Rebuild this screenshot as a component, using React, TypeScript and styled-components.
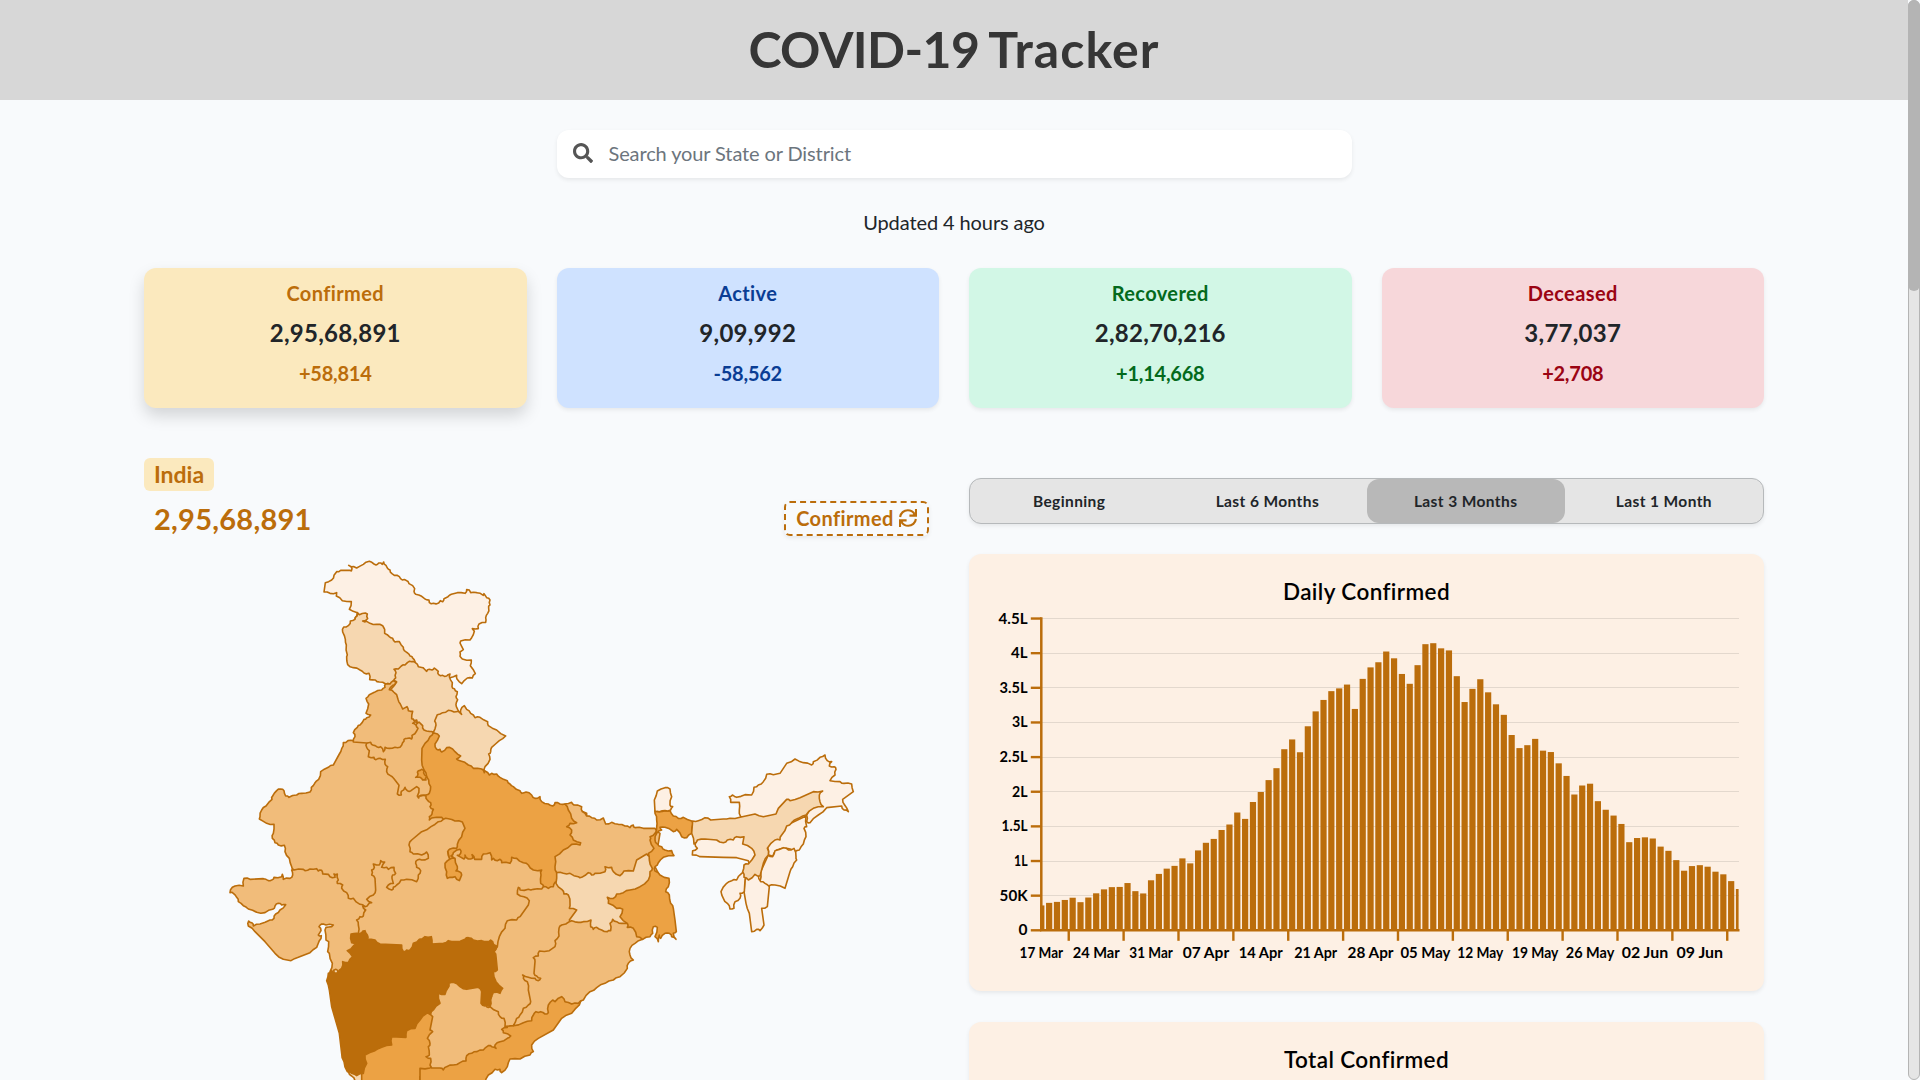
import React from 'react';
import styled, { createGlobalStyle } from 'styled-components';
import { FaSearch } from 'react-icons/fa';

const FONT = `Lato, "Open Sans", "Liberation Sans", sans-serif`;
const ACCENT = '#bb6d0b';

const GlobalStyle = createGlobalStyle`
  * { box-sizing: border-box; }
  html, body { margin: 0; height: 1080px; overflow: hidden; }
  body { background: #f8fafc; font-family: ${FONT}; color: #212529; }
`;

const Shell = styled.div`
  display: flex;
  height: 1080px;
  overflow: hidden;
`;

const Page = styled.div`
  flex: 1;
  min-width: 0;
  height: 1080px;
  overflow: hidden;
`;

const ScrollTrack = styled.div`
  width: 12px;
  background: #e5e5e5;
  border: 1px solid #b4b4b4;
  border-radius: 6px;
`;

const ScrollThumb = styled.div`
  width: 12px;
  height: 291px;
  margin: -1px;
  background: #b4b4b4;
  border-radius: 6px;
`;

const Header = styled.header`
  display: flex;
  align-items: center;
  justify-content: center;
  height: 100px;
  padding-bottom: 3px;
  background: #d7d7d7;
`;

const Title = styled.h1`
  display: flex;
  gap: 9px;
  margin: 0;
  font-size: 50px;
  line-height: 60px;
  font-weight: 700;
  color: #363636;
`;

const TitleWord = styled.span<{ $tracking: number }>`
  letter-spacing: ${(p) => p.$tracking}px;
`;

const Container = styled.main`
  width: 1620px;
  margin: 0 auto;
  padding-top: 30px;
`;

const SearchBox = styled.label`
  display: flex;
  align-items: center;
  gap: 16px;
  width: 795px;
  height: 48px;
  margin: 0 auto;
  padding: 0 16px 2px;
  border-radius: 12px;
  background: #fff;
  box-shadow: 0 2px 4px rgba(0, 0, 0, 0.075);
  color: #555;
  font-size: 20px;
`;

const SearchInput = styled.input`
  flex: 1;
  border: 0;
  outline: 0;
  padding: 0;
  background: transparent;
  font: 400 20px ${FONT};
  letter-spacing: -0.12px;
  &::placeholder { color: #6c757d; opacity: 1; }
`;

const Updated = styled.p`
  margin: 32px 0 34px;
  text-align: center;
  font-size: 20px;
  line-height: 24px;
  letter-spacing: -0.1px;
`;

const CardRow = styled.section`
  display: grid;
  grid-template-columns: repeat(4, 1fr);
  gap: 30px;
`;

const StatCard = styled.article<{ $bg: string; $fg: string; $raised?: boolean }>`
  display: flex;
  flex-direction: column;
  align-items: center;
  height: 140px;
  padding-top: 12px;
  border-radius: 12px;
  background: ${(p) => p.$bg};
  color: ${(p) => p.$fg};
  font-size: 20px;
  line-height: 26px;
  font-weight: 700;
  box-shadow: ${(p) => (p.$raised ? '0 8px 16px rgba(0,0,0,.15)' : '0 2px 4px rgba(0,0,0,.075)')};
`;

const StatLabel = styled.div`
  letter-spacing: 0.4px;
`;

const StatDelta = styled.div`
  letter-spacing: -0.25px;
`;

const StatTotal = styled.div`
  margin: 12px 0;
  font-size: 24px;
  line-height: 30px;
  letter-spacing: 0.25px;
  color: #212529;
`;

const Columns = styled.section`
  display: grid;
  grid-template-columns: 795px 795px;
  gap: 30px;
`;

const MapColumn = styled.div`
  display: flex;
  flex-direction: column;
  align-items: flex-start;
  padding-top: 50px;
`;

const RegionBadge = styled.span`
  display: flex;
  align-items: center;
  justify-content: center;
  width: 70px;
  height: 33px;
  padding-bottom: 2px;
  border-radius: 6px;
  background: #fbe9be;
  color: ${ACCENT};
  font-size: 23px;
  font-weight: 700;
`;

const MapHeader = styled.div`
  display: flex;
  justify-content: space-between;
  align-items: center;
  width: 795px;
  height: 35px;
  margin-top: 10px;
  padding: 0 10px;
  color: ${ACCENT};
`;

const RegionTotal = styled.span`
  font-size: 29px;
  font-weight: 700;
  letter-spacing: 0.25px;
`;

const MetricButton = styled.button`
  display: flex;
  align-items: center;
  justify-content: center;
  gap: 5px;
  width: 145px;
  height: 35px;
  padding: 0 0 2px;
  border: 2px dashed ${ACCENT};
  border-radius: 6px;
  background: transparent;
  color: ${ACCENT};
  font: 700 20px ${FONT};
  letter-spacing: 0.4px;
  box-shadow: 0 2px 4px rgba(0, 0, 0, 0.075);
`;

const MapSvg = styled.svg`
  display: block;
  width: 795px;
  height: 530px;
  margin-top: 14px;
`;

const ChartColumn = styled.div`
  padding-top: 70px;
`;

const Tabs = styled.div`
  display: grid;
  grid-template-columns: repeat(4, 1fr);
  height: 46px;
  border: 1px solid #b6b9bb;
  border-radius: 12px;
  background: #e5e5e5;
  box-shadow: 0 2px 4px rgba(0, 0, 0, 0.075);
`;

const Tab = styled.button<{ $active?: boolean }>`
  border: 0;
  border-radius: 12px;
  background: ${(p) => (p.$active ? '#b8b8b8' : 'transparent')};
  color: #212529;
  font: 700 15.5px ${FONT};
  letter-spacing: 0.4px;
`;

const ChartCard = styled.article`
  height: 437px;
  margin-top: 30px;
  border-radius: 12px;
  background: #fdf0e4;
  box-shadow: 0 2px 4px rgba(0, 0, 0, 0.075);
  & + & { margin-top: 31px; }
`;

const ChartTitle = styled.h2`
  margin: 0;
  padding-top: 23px;
  text-align: center;
  font-size: 22.5px;
  line-height: 30px;
  font-weight: 600;
  letter-spacing: 0.4px;
  color: #000;
`;

const ChartSvg = styled.svg`
  display: block;
  width: 795px;
  height: 380px;
  margin-top: -1px;
  font-family: ${FONT};
  font-size: 14.3px;
  font-weight: 700;
`;

type Piece = [tile: 'N' | 'W' | 'C' | 'E', points: string];
type Region = { name: string; shade: string; pieces: Piece[] };

const TILE_ORIGIN = { N: [0, 0], W: [0, 780], C: [600, 420], E: [1260, 570] } as const;

const S1 = '#fdf0e4';
const S2 = '#f6d7b0';
const S3 = '#f1bc7a';
const S4 = '#eca244';
const S5 = ACCENT;

// Painted back to front: a region's hidden edges run below its later neighbours.
const REGIONS: Region[] = [
  { name: 'Ladakh', shade: S1, pieces: [['N', '350,65 362,61 385,61 394,63 396,56 386,46 402,50 410,54 430,43 448,34 462,42 468,45 476,39 487,43 491,36 498,46 502,54 510,60 516,71 523,76 538,80 547,90 558,91 567,101 578,107 584,116 582,124 587,133 605,139 615,147 627,150 628,158 640,160 656,159 661,152 668,155 672,146 684,140 694,133 712,128 735,130 740,119 748,120 752,128 770,128 790,136 792,131 800,143 810,150 810,165 806,174 803,190 797,203 797,217 777,222 775,236 757,236 763,244 755,263 750,270 722,273 720,279 730,299 720,306 720,319 727,327 754,330 751,347 766,371 757,384 742,384 725,401 711,387 710,376 690,383 660,400 600,370 540,340 430,240 405,205 412,188 388,178 394,155 367,152 349,138 350,128 330,130 312,126 316,98 335,90 342,76']] },
  { name: 'Jammu and Kashmir', shade: S2, pieces: [['N', '412,188 418,194 436,189 442,192 443,206 428,213 440,214 450,220 470,223 488,227 494,238 494,250 508,260 518,265 525,276 538,275 550,292 553,302 563,309 570,318 578,324 585,335 590,360 540,400 510,402 497,402 478,396 466,390 449,389 447,370 432,369 420,360 400,353 383,344 380,320 382,315 379,285 376,268 368,246 371,231 386,226 391,213 405,208 411,198']] },
  { name: 'Uttar Pradesh', shade: S4, pieces: [['C', '40,127 100,130 180,220 195,243 208,255 215,250 230,252 240,262 262,272 270,282 280,290 300,302 306,310 318,306 335,315 345,325 360,320 365,335 385,342 398,348 405,338 420,342 435,342 500,370 500,460 430,520 430,560 430,620 340,620 300,600 100,560 80,470 90,400 30,400 0,330'], ['N', '600,700 590,600']] },
  { name: 'Himachal Pradesh', shade: S2, pieces: [['N', '585,337 575,335 563,337 555,345 544,348 535,357 522,358 528,368 527,384 521,392 530,396 512,418 510,430 535,490 560,510 590,545 605,560 640,550 660,540 690,520 720,500 713,478 709,470 709,458 713,449 708,440 712,425 703,416 696,410 697,398 688,380 690,372 680,378 668,376 656,374 655,364 643,354 636,360 628,358 620,364 609,353 595,350']] },
  { name: 'Rajasthan', shade: S3, pieces: [['N', '602,738 600,700 540,650 470,600 470,570 420,560 400,572 384,572 370,578 365,596 358,612 340,645 325,652 302,665 296,688 284,700 274,712 270,726 245,730 230,735 207,742 197,738 192,722 182,717 170,722 158,738 156,748 138,768 125,780 120,800'], ['W', '118,27 140,40 162,43 160,70 157,85 165,98 175,105 193,106 195,125 208,145 215,170 222,180 222,200 260,200 330,230 400,300 435,310 500,290 600,240 640,170 680,60 670,28 665,22 635,24 628,30 628,20'], ['N', '636,792 640,778 630,770 632,758 622,750 618,738']] },
  { name: 'Haryana', shade: S3, pieces: [['N', '440,580 440,592 448,602 445,620 462,622 468,629 480,625 496,628 495,642 503,650 500,665 510,676 522,686 537,706 532,732 544,735 544,724 555,712 562,722 573,722 590,710 597,715 592,738 596,744 602,736 618,735 628,730 632,710 626,690 620,680 612,660 605,630 606,595 615,580 630,560 640,547 628,544 612,540 608,527 597,516 580,530 560,550 480,560 452,560']] },
  { name: 'Punjab', shade: S3, pieces: [['N', '497,402 495,412 485,420 463,427 448,434 438,445 446,462 438,490 452,495 440,503 432,508 420,525 412,532 400,548 405,560 400,576 440,579 452,577 460,586 470,590 482,590 490,605 495,592 508,595 525,592 540,592 548,578 552,568 562,565 575,567 576,556 590,543 594,535 588,525 578,520 585,515 592,518 590,510 582,512 575,506 578,484 565,482 561,470 548,477 541,462 534,448 530,434 521,426 508,419 514,410 524,404 528,396 520,392 510,402']] },
  { name: 'Uttarakhand', shade: S2, pieces: [['N', '640,547 648,525 644,513 652,494 668,488 685,481 702,486 715,484 725,493 722,480 733,467 740,478 752,490 765,503 780,502 803,515 805,527 830,540 857,558 838,572 815,592 812,605 806,612 810,628 795,650 793,668 785,657 760,655 745,645 722,633 710,627 722,618 705,605 688,592 680,593 665,606 660,598 650,598 645,582 658,558 645,550']] },
  { name: 'Delhi', shade: S4, pieces: [['N', '595,662 605,658 612,662 614,675 620,680 618,690 608,690 600,682 587,682 594,672']] },
  { name: 'Gujarat', shade: S3, pieces: [['W', '222,180 250,178 255,182 270,177 290,176 295,183 305,181 308,192 325,193 330,200 345,202 342,192 352,192 355,210 352,220 368,225 365,235 380,248 385,265 400,265 420,283 435,290 440,320 430,380 420,400 380,500 335,500 330,485 337,460 328,430 323,425 326,395 318,390 315,360 318,352 335,350 340,345 318,345 305,342 297,350 303,362 295,375 304,377 298,392 290,412 270,428 235,442 213,452 190,448 165,430 135,395 105,365 85,348 86,333 95,338 100,348 120,342 150,330 162,325 167,312 180,300 197,284 185,285 175,280 165,288 158,298 135,308 110,307 85,297 70,287 55,275 50,262 40,250 30,248 37,232 45,228 70,228 72,205 90,208 130,206 145,212 155,210 162,202 185,200 187,193 190,208 210,205 218,195 215,180']] },
  { name: 'Madhya Pradesh', shade: S3, pieces: [['W', '670,28 685,26 705,33 727,36 735,55 725,80 712,103 710,115 690,117 683,125 688,145 695,150 705,150 693,138 700,128 720,118 722,130 712,136 732,147 735,135 745,147 758,145 756,134 764,148 785,148 790,132 810,128 815,150 820,145 832,152 840,148 845,158 870,160 875,142 890,145 910,158 925,165 940,180'], ['C', '365,540 363,555 362,580 372,592 360,620 340,640 360,700 300,740 240,790 200,790 0,790'], ['W', '440,420 415,370 415,345 410,330 420,320 430,318 437,300 428,288 435,290 445,283 455,278 440,268 460,255 467,240 465,205 455,195 455,180 463,172 460,162 478,165 482,152 494,156 485,172 500,172 505,178 522,172 527,190 518,195 516,205 520,220 505,225 500,232 515,240 520,232 530,225 543,210 560,208 590,215 595,195 602,182 590,172 587,160 592,150 605,150 625,145 620,126 605,135 580,132 570,125 567,105 575,90 605,65 633,50 655,35']] },
  { name: 'Lalitpur', shade: S4, pieces: [['W', '705,145 690,147 675,160 680,185 682,205 690,202 705,200 718,212 725,195 718,185 708,183 712,170']] },
  { name: 'Bihar', shade: S3, pieces: [['C', '435,342 455,337 462,345 485,350 487,365 500,378 515,383 530,390 550,384 557,402 575,397 595,403 615,408 630,413 640,405 645,413 670,415 705,415 720,430 710,490 690,500 670,540 600,580 430,575 410,548 405,530 405,500 430,480 455,463 480,465 482,458 460,450 450,435 455,420 440,410 450,400 470,398 455,385 445,360']] },
  { name: 'Chhattisgarh', shade: S3, pieces: [['C', '405,577 400,590 385,595 370,590 365,597 340,598 325,598 300,600 295,592 292,612 312,620 328,632 325,645 300,680 290,690 262,692 255,715 238,740 232,770 210,800 210,930 210,980 240,1030 280,1007 340,960 400,880 450,760 500,690 470,620 430,575']] },
  { name: 'Jharkhand', shade: S2, pieces: [['C', '410,548 430,550 450,550 475,560 485,562 505,548 515,555 525,550 555,545 555,530 575,532 580,545 600,557 612,543 640,543 650,510 680,492 690,500 700,520 720,560 640,640 660,700 600,740 470,740 448,690 470,660 448,655 450,640 445,615 432,612 425,598 408,580']] },
  { name: 'Goa', shade: S2, pieces: [['W', '385,785 395,798 405,812 425,830 430,785']] },
  { name: 'Karnataka', shade: S4, pieces: [['W', '425,850 425,760 430,720 600,600 640,600 650,780 600,800 600,850']] },
  { name: 'Andhra Pradesh', shade: S4, pieces: [['C', '490,925 478,945 455,970 425,985 400,1020 355,1045 335,1065 340,1085 330,1095 300,1107 270,1107 262,1130 245,1148 240,1138 225,1138 205,1155 195,1180 190,1210 0,1210 0,1135 30,1134 60,1110 200,1040 245,1010 280,1007 340,960 420,880']] },
  { name: 'Odisha', shade: S3, pieces: [['C', '448,695 455,692 475,697 490,695 513,690 512,710 520,718 530,712 545,720 562,725 572,722 570,700 578,688 590,695 605,700 640,700 680,720 668,748 645,760 630,775 630,795 640,810 625,820 622,835 600,860 580,870 555,880 530,893 510,905 490,930 475,940 455,942 435,935 425,920 405,935 398,930 385,945 385,968 375,972 362,965 348,965 340,975 335,992 310,998 280,1007 290,985 300,975 310,955 325,945 332,935 325,900 322,875 310,865 308,855 325,862 345,865 355,872 362,865 350,858 342,850 345,815 340,803 355,798 358,783 388,782 405,770 405,752 417,738 417,715 425,705']] },
  { name: 'Telangana', shade: S3, pieces: [['C', '210,950 235,965 240,980 252,985 255,1010 262,1012 245,1018 250,1028 272,1038 262,1045 240,1055 225,1065 228,1075 215,1070 205,1067 190,1080 170,1085 155,1090 140,1097 138,1113 120,1118 100,1125 80,1130 70,1140 60,1134 35,1134 30,1125 32,1105 18,1100 28,1095 25,1070 30,1060 22,1045 38,1025 30,1020 38,980 25,970'], ['W', '640,570 660,520 700,490 800,520 815,560 800,590']] },
  { name: 'West Bengal', shade: S4, pieces: [['C', '705,362 718,365 735,362 750,362 760,378 775,385 790,382 815,393 820,400 815,430 800,443 785,440 770,418 760,425 735,412 720,412 725,420 710,430 705,450 712,462 725,470 735,480 755,482 762,497 730,502 715,518 705,530 705,543 720,555 747,565 745,590 737,605 748,615 752,640 760,655 765,690 769,725 760,730 768,748 755,740 748,730 735,730 722,745 718,735 715,755 705,740 712,712 700,710 698,730 690,740 668,748 650,740 640,715 622,712 622,700 600,680 608,658 590,655 565,640 562,622 580,625 590,612 610,608 630,600 660,590 685,570 690,545 697,535 688,510 685,490 702,475 690,450 690,440 705,430 710,412 710,390 705,370']] },
  { name: 'Maharashtra', shade: S5, pieces: [['W', '393,372 410,370 425,368 435,362 442,375 442,388 465,390 480,402 545,405 550,425 560,420 570,420 580,400 598,388 615,380 634,380 636,402 670,400 685,392 705,395 735,388 745,383 760,390 785,392 800,395 812,390 820,402 830,408 822,425 828,440 832,480 820,485 828,515 848,535 840,550 820,547 812,570 810,590 795,588 783,580 785,545 775,532 740,538 720,530 700,517 687,520 683,535 675,553 655,550 660,580 640,600 632,612 620,610 600,630 585,655 560,662 558,682 515,680 515,705 485,712 465,722 435,735 440,760 430,790 410,797 395,790 382,785 372,755 365,730 358,670 345,625 335,590 328,540 320,512 325,490 335,482 345,490 355,488 365,475 368,455 385,458 398,440 382,422 400,408 415,398 395,398']] },
  { name: 'Daman', shade: S2, pieces: [['W', '341,481 348,478 354,482 352,489 343,489']] },
  { name: 'Sikkim', shade: S1, pieces: [['C', '705,365 703,330 712,303 735,293 750,297 755,320 750,345 758,350 752,360 735,362 718,365']] },
  { name: 'Arunachal Pradesh', shade: S1, pieces: [['E', '302,230 298,210 298,187 272,187 268,170 278,165 290,172 315,164 335,165 342,142 355,135 370,125 380,103 400,104 420,100 440,70 465,57 490,68 515,75 520,65 540,52 555,45 562,62 575,65 568,78 582,80 588,88 585,105 570,122 600,125 612,130 635,132 640,155 608,178 614,195 625,215 612,210 605,198 560,203 535,225 510,248 500,245 500,225 520,190 400,240']] },
  { name: 'Meghalaya', shade: S1, pieces: [['E', '172,298 165,310 172,325 158,332 157,345 180,350 250,352 290,353 325,362 330,372 345,345 340,310 300,285 180,285']] },
  { name: 'Nagaland', shade: S1, pieces: [['E', '498,228 500,260 492,265 498,290 490,312 478,330 465,335 440,325 410,330 398,350 385,345 382,320 430,260']] },
  { name: 'Manipur', shade: S1, pieces: [['E', '398,350 405,332 430,323 445,330 462,325 468,350 470,360 458,380 450,395 435,445 405,435 385,438 360,425 362,395 385,345']] },
  { name: 'Mizoram', shade: S1, pieces: [['E', '315,420 312,455 318,490 328,520 335,575 350,568 360,572 372,555 365,505 382,500 388,440 375,430 362,425 355,405 330,405']] },
  { name: 'Tripura', shade: S1, pieces: [['E', '315,400 305,400 290,420 275,422 260,430 243,455 250,475 262,490 270,507 282,505 285,485 300,475 300,460 313,455 315,420']] },
  { name: 'Assam', shade: S2, pieces: [['E', '158,243 175,242 195,233 212,240 250,237 270,235 300,232 345,222 370,230 408,222 415,205 440,178 450,182 480,173 520,155 548,153 538,165 540,185 550,200 520,205 498,225 475,235 455,248 440,258 425,285 420,300 405,300 382,325 385,345 370,370 360,408 345,403 325,420 312,412 308,395 312,375 325,372 345,345 335,325 308,312 312,290 290,290 280,300 262,300 250,308 230,300 195,297 172,300 162,312 155,280']] },
];

const offsetPoints = ([tile, pts]: Piece): [number, number][] => {
  const [ox, oy] = TILE_ORIGIN[tile];
  return pts.split(' ').map((p) => {
    const [x, y] = p.split(',').map(Number);
    return [x + ox, y + oy];
  });
};

const toPoints = (pieces: Piece[]) => {
  const pts = pieces.flatMap(offsetPoints);
  const out: string[] = [];
  pts.forEach(([x, y], i) => {
    const [nx, ny] = pts[(i + 1) % pts.length];
    out.push(`${x},${y}`);
    const len = Math.hypot(nx - x, ny - y);
    if (len > 9 && len < 34) {
      const k = (((x * 7 + y * 13) % 5) - 2) * 1.1;
      out.push(`${(x + nx) / 2 + (k * (ny - y)) / len},${(y + ny) / 2 - (k * (nx - x)) / len}`);
    }
  });
  return out.join(' ');
};

// Three map units per pixel; the map's zero lies 76px inside the panel's left edge.
const IndiaMap = () => (
  <MapSvg viewBox="-228 0 2385 1590" strokeLinejoin="round">
    {REGIONS.map((r) => (
      <polygon key={r.name} points={toPoints(r.pieces)} fill={r.shade} stroke={ACCENT} strokeWidth={4.8} />
    ))}
  </MapSvg>
);

// Daily new cases, in thousands.
const DAILY = [
  35.9, 39.6, 41, 43.8, 47, 40.6, 47.3, 53.4, 59.1, 62.3, 62.6, 68.2, 56.5, 53.2, 72.2, 81.4, 89, 93, 103.8, 96.6,
  115.3, 126.3, 131.9, 144.8, 152.7, 170, 160.8, 185.2, 199.6, 216.8, 234, 261.4, 275.5, 257, 294.5, 316, 332.5,
  345.2, 349.2, 354.7, 319.5, 362.9, 379.5, 386.9, 402.4, 392.6, 370, 355.8, 382.7, 413, 414.4, 407, 404, 366.8,
  329.5, 348.5, 362.4, 343.5, 326.2, 311, 281.9, 263, 267.2, 276.3, 259.3, 257.3, 241, 222.8, 196, 209, 211.6, 186.4,
  174, 165.6, 153.5, 127.2, 133.2, 134.2, 132.5, 120.8, 114.7, 101.3, 86, 92.7, 94, 91.8, 84.6, 80.8, 71, 59.6,
];
const Y_LABELS: [string, number][] = [
  ['0', 9], ['50K', 28], ['1L', 13.5], ['1.5L', 26], ['2L', 15.5], ['2.5L', 28], ['3L', 15.5], ['3.5L', 28],
  ['4L', 16.5], ['4.5L', 29],
];
const X_LABELS: [string, number][] = [
  ['17 Mar', 43.5], ['24 Mar', 47], ['31 Mar', 43.5], ['07 Apr', 46.5], ['14 Apr', 44], ['21 Apr', 43], ['28 Apr', 46],
  ['05 May', 50], ['12 May', 46], ['19 May', 46.5], ['26 May', 48.5], ['02 Jun', 46.5], ['09 Jun', 46.5],
];
const X0 = 72.3;
const X1 = 770;
const Y0 = 324.3;
const STEP = (X1 - X0) / (DAILY.length - 1);
const ROW = 34.64;

const DailyChart = () => (
  <ChartSvg viewBox="0 0 795 380">
    <clipPath id="plot"><rect x={X0 - 1} y={0} width={X1 - X0 + 0.6} height={Y0} /></clipPath>
    {Y_LABELS.map(([t, w], i) => {
      const y = Y0 - i * ROW;
      return (
        <g key={t}>
          <line x1={X0} x2={X1} y1={Math.floor(y) + 0.5} y2={Math.floor(y) + 0.5} stroke="#e3d8cd" />
          <line x1={X0 - 10.5} x2={X0} y1={y} y2={y} stroke={ACCENT} strokeWidth={2.4} />
          <text x={58.6 - w} y={y + 5} textLength={w} lengthAdjust="spacingAndGlyphs">{t}</text>
        </g>
      );
    })}
    <g clipPath="url(#plot)">
      {DAILY.map((v, i) => {
        const h = (v / 50) * ROW;
        return <rect key={i} x={X0 + i * STEP - 3.1} y={Y0 - h} width={6.2} height={h} fill={ACCENT} />;
      })}
    </g>
    <path d={`M${X0} ${Y0 - 9 * ROW - 1.2}V${Y0}H${X1 + 0.5}`} fill="none" stroke={ACCENT} strokeWidth={2.5} />
    {X_LABELS.map(([t, w], i) => (
      <g key={t}>
        <line x1={X0 + (7 * i + 3.5) * STEP} x2={X0 + (7 * i + 3.5) * STEP} y1={Y0} y2={Y0 + 10.5} stroke={ACCENT} strokeWidth={2.4} />
        <text x={X0 + 7 * i * STEP} y={352} textAnchor="middle" textLength={w} lengthAdjust="spacingAndGlyphs">{t}</text>
      </g>
    ))}
  </ChartSvg>
);

const RefreshIcon = () => (
  <svg width="18" height="18" viewBox="0 0 18 18" fill="none" stroke="currentColor" strokeWidth="2.1">
    <path d="M1.1 8C1.6 4 4.9 1.2 8.8 1.2c2.8 0 5.2 1.4 6.6 3.6M16.9 10c-.5 4-3.8 6.8-7.7 6.8-2.8 0-5.2-1.4-6.6-3.6" />
    <path d="M17 0v6.6h-6.6M1 18v-6.6h6.6" />
    <path d="M17 2.5v4h-4zM1 15.5v-4h4z" fill="currentColor" stroke="none" />
  </svg>
);

const STATS = [
  { label: 'Confirmed', total: '2,95,68,891', delta: '+58,814', bg: '#fbe9be', fg: ACCENT, raised: true },
  { label: 'Active', total: '9,09,992', delta: '-58,562', bg: '#cfe2ff', fg: '#0a3d94' },
  { label: 'Recovered', total: '2,82,70,216', delta: '+1,14,668', bg: '#d2f7e6', fg: '#046a1c' },
  { label: 'Deceased', total: '3,77,037', delta: '+2,708', bg: '#f7d7da', fg: '#9b0413' },
];
const RANGES = ['Beginning', 'Last 6 Months', 'Last 3 Months', 'Last 1 Month'];

export default function App() {
  return (
    <>
      <GlobalStyle />
      <Shell>
        <Page>
          <Header>
            <Title>
              <TitleWord $tracking={-0.6}>COVID-19</TitleWord>
              <TitleWord $tracking={1.1}>Tracker</TitleWord>
            </Title>
          </Header>
          <Container>
            <SearchBox>
              <FaSearch />
              <SearchInput placeholder="Search your State or District" />
            </SearchBox>
            <Updated>Updated 4 hours ago</Updated>
            <CardRow>
              {STATS.map((s) => (
                <StatCard key={s.label} $bg={s.bg} $fg={s.fg} $raised={s.raised}>
                  <StatLabel>{s.label}</StatLabel>
                  <StatTotal>{s.total}</StatTotal>
                  <StatDelta>{s.delta}</StatDelta>
                </StatCard>
              ))}
            </CardRow>
            <Columns>
              <MapColumn>
                <RegionBadge>India</RegionBadge>
                <MapHeader>
                  <RegionTotal>2,95,68,891</RegionTotal>
                  <MetricButton>Confirmed<RefreshIcon /></MetricButton>
                </MapHeader>
                <IndiaMap />
              </MapColumn>
              <ChartColumn>
                <Tabs>
                  {RANGES.map((r) => <Tab key={r} $active={r === 'Last 3 Months'}>{r}</Tab>)}
                </Tabs>
                <ChartCard>
                  <ChartTitle>Daily Confirmed</ChartTitle>
                  <DailyChart />
                </ChartCard>
                <ChartCard>
                  <ChartTitle>Total Confirmed</ChartTitle>
                </ChartCard>
              </ChartColumn>
            </Columns>
          </Container>
        </Page>
        <ScrollTrack><ScrollThumb /></ScrollTrack>
      </Shell>
    </>
  );
}
